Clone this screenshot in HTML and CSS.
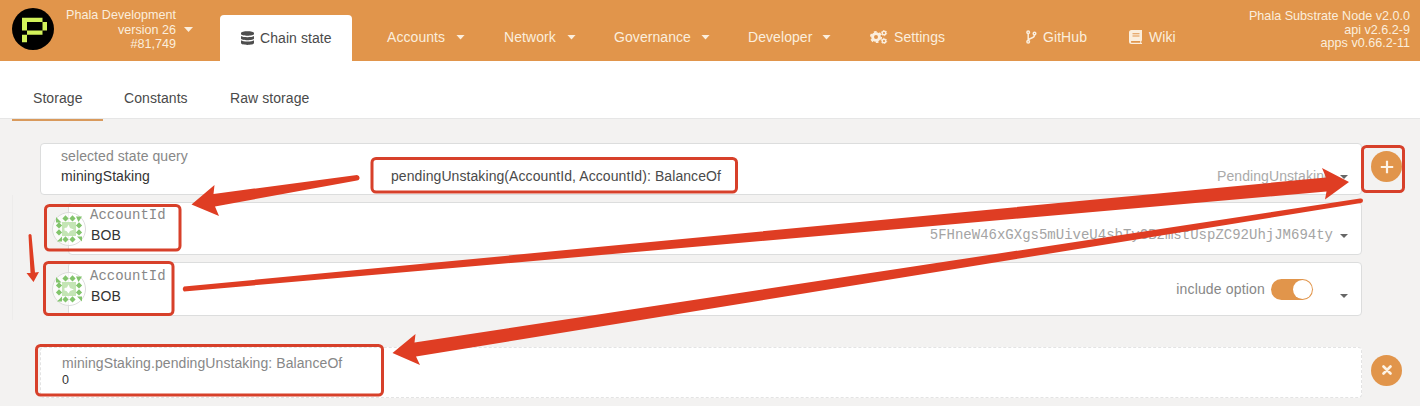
FILE: index.html
```html
<!DOCTYPE html>
<html lang="en">
<head>
<meta charset="utf-8">
<title>Chain state</title>
<link rel="stylesheet" href="styles.css">
</head>
<body>
<svg class="defs" width="0" height="0">
  <defs>
    <g id="identicon">
      <circle cx="17" cy="17" r="16.5" fill="#fff" fill-opacity=".65" stroke="#dcdcdc"/>
      <path fill="#c4e5b5" d="M10 10h14v14h-14z"/>
      <path fill="#fff" d="M16.500 12.500l1.500 3.500 4 1.500-4 1.500-1.500 2.500-2-2.500-2-.500v-2.500l2.500-.500z"/>
      <path fill="#82c46c" d="M4 5l5.500 5.500H4zM13.500 3.300l3.100 3.100-3.100 3.100-3.100-3.100zM20.500 3.300l3.100 3.100-3.100 3.100-3.100-3.100zM24 4.500h6l-3.500 5.500zM7 10.300l3.100 3.100-3.100 3.100-3.100-3.100zM7 17.300l3.100 3.100-3.100 3.100-3.100-3.100zM27 10.300l3.100 3.100-3.100 3.100-3.100-3.100zM27 17.300l3.100 3.100-3.100 3.100-3.100-3.100zM5 29.500l5-5V29.500zM13.500 24.300l3.100 3.100-3.100 3.100-3.100-3.100zM20.500 24.300l3.100 3.100-3.100 3.100-3.100-3.100zM25 24.500h5v5z"/>
    </g>
  </defs>
</svg>
<header class="topbar">
  <div class="chain">
    <svg class="logo" viewBox="0 0 42 42"><circle cx="21" cy="21" r="21"/><path fill="#d3f25b" fill-rule="evenodd" d="M10 9.700h20.500v4.300h4.500v8.500h-4.500v4.300H15v-4.300h-5zM15 14v8.500h15.500V14zM10 26.800h5v7.400h-5z"/></svg>
    <div class="chain-info">Phala Development<br>version 26<br>#81,749</div>
    <i class="caret"></i>
  </div>
  <nav class="menu">
    <a class="item active"><svg width="13" height="14" viewBox="0 0 13 14"><path fill="#4e4e4e" d="M0 2C0-.5 13-.5 13 2v1c0 2.300-13 2.300-13 0zM0 5c2 1.600 11 1.600 13 0v2.500c0 2.300-13 2.300-13 0zM0 9.300c2 1.600 11 1.600 13 0V12c0 2.500-13 2.500-13 0z"/></svg><span>Chain state</span></a>
    <a class="item accounts"><span>Accounts</span><i class="caret"></i></a>
    <a class="item network"><span>Network</span><i class="caret"></i></a>
    <a class="item governance"><span>Governance</span><i class="caret"></i></a>
    <a class="item developer"><span>Developer</span><i class="caret"></i></a>
    <a class="item settings"><svg width="18" height="14" viewBox="0 0 18 14"><circle cx="6" cy="7" r="3.400" fill="none" stroke="#fbeedd" stroke-width="2.800"/><circle cx="6" cy="7" r="5.200" fill="none" stroke="#fbeedd" stroke-width="1.800" stroke-dasharray="2.720"/><g fill="none" stroke="#fbeedd"><circle cx="14" cy="3" r="1.800" stroke-width="1.400"/><circle cx="14" cy="3" r="2.700" stroke-width=".9" stroke-dasharray="1.410"/><circle cx="14" cy="11" r="1.800" stroke-width="1.400"/><circle cx="14" cy="11" r="2.700" stroke-width=".9" stroke-dasharray="1.410"/></g></svg><span>Settings</span></a>
    <a class="item github"><svg width="11" height="14" viewBox="0 0 11 14"><g fill="none" stroke="#fbeedd" stroke-width="1.500"><circle cx="2.200" cy="2.200" r="1.300"/><circle cx="2.200" cy="11.800" r="1.300"/><circle cx="8.500" cy="3.500" r="1.300"/><path d="M2.200 3.500v7M8.500 5c0 4-5.500 2.500-6.300 5.300"/></g></svg><span>GitHub</span></a>
    <a class="item wiki"><svg width="13" height="14" viewBox="0 0 13 14"><path fill="#fbeedd" fill-rule="evenodd" d="M2.500 0H13v10.500l-.7.500v2h.7v1H2.500A2.500 2.500 0 0 1 0 11.500v-9A2.500 2.500 0 0 1 2.500 0zM3.500 3.300v1H10.500v-1zm0 2.200v1H10.500v-1zM2.500 11a1 1 0 0 0 0 1.800h8.700V11z"/></svg><span>Wiki</span></a>
  </nav>
  <div class="versions">Phala Substrate Node v2.0.0<br>api v2.6.2-9<br>apps v0.66.2-11</div>
</header>
<div class="tabs">
  <a class="tab selected">Storage</a><a class="tab constants">Constants</a><a class="tab raw">Raw storage</a>
</div>
<main>
  <div class="line">
    <section class="box query">
      <div class="module"><label>selected state query</label><span>miningStaking</span></div>
      <div class="method">pendingUnstaking(AccountId, AccountId): BalanceOf</div>
      <div class="doc">PendingUnstaking</div>
      <i class="caret dark"></i>
    </section>
    <button class="round"><svg width="14" height="14" viewBox="0 0 14 14"><path d="M7 .8v12.400M.8 7h12.400" stroke="#fdf3e6" stroke-width="2.200"/></svg></button>
  </div>
  <div class="params">
    <section class="box param">
      <svg class="avatar" viewBox="0 0 34 34"><use href="#identicon"/></svg>
      <div class="who"><label>AccountId</label><span>BOB</span></div>
      <div class="address">5FHneW46xGXgs5mUiveU4sbTyGBzmstUspZC92UhjJM694ty</div>
      <i class="caret dark"></i>
    </section>
    <section class="box param second">
      <svg class="avatar" viewBox="0 0 34 34"><use href="#identicon"/></svg>
      <div class="who"><label>AccountId</label><span>BOB</span></div>
      <div class="option">include option</div>
      <div class="toggle"><b></b></div>
      <i class="caret dark"></i>
    </section>
  </div>
  <div class="line">
    <section class="box result"><label>miningStaking.pendingUnstaking: BalanceOf</label><span>0</span></section>
    <button class="round"><svg width="10" height="10" viewBox="0 0 10 10"><path d="M1.500 1.500l7 7M8.500 1.500l-7 7" stroke="#fdf3e6" stroke-width="2.600" stroke-linecap="round"/></svg></button>
  </div>
</main>
<svg class="marks" width="1420" height="406" viewBox="0 0 1420 406">
  <g fill="none" stroke="#d7402a" stroke-width="3">
    <rect x="372" y="158.500" width="364.500" height="33.500" rx="4"/>
    <rect x="45.500" y="205.500" width="134.500" height="44.500" rx="4"/>
    <rect x="44.500" y="262.500" width="128.500" height="52" rx="4"/>
    <rect x="36.500" y="345.500" width="346" height="49.500" rx="4"/>
    <rect x="1362.500" y="146.500" width="41" height="45" rx="4"/>
  </g>
  <g fill="#df3d23">
    <path d="M357 175Q360 175.500 359.500 178.500Q359 180.500 357 180.500L215 206.500L219 216L191.500 204.500L214.500 185L213.500 194Z"/>
    <path d="M28.500 235Q30 233 31.500 235L35 272.500L39 272L33.500 282L26.500 273L30.500 273Z"/>
    <path d="M184 286.500L1326 177.500L1322 168L1349 182L1325 199.500L1326.500 191.500L184 291.500Q181.500 289 184 286.500Z"/>
    <path d="M1360 198.500Q1363 198 1363 200.500Q1363 202.500 1361 203L416 356.500L420 365L392.500 353L415.500 334L414.500 342.500Z"/>
  </g>
</svg>
</body>
</html>
```
FILE: styles.css
```css
* { box-sizing: border-box; }
body {
  margin: 0;
  width: 1420px;
  height: 406px;
  overflow: hidden;
  background: #f3f2f1;
  color: #4a4a4a;
  font: 14px/18px "Liberation Sans", Arial, sans-serif;
}
.defs { display: block; }
.topbar {
  display: flex;
  height: 61px;
  background: #e1954b;
  color: #fbeedd;
}
.chain { display: flex; width: 220px; padding: 8px 0 0 12px; }
.logo { width: 42px; height: 42px; }
.chain-info {
  width: 122px;
  text-align: right;
  font-size: 12.6px;
  line-height: 14.5px;
  white-space: nowrap;
}
.chain .caret { margin: 19px 0 0 8px; }
.caret {
  flex: none;
  width: 9px;
  height: 5px;
  background: currentColor;
  clip-path: polygon(0 0, 100% 0, 50% 100%);
}
.menu { display: flex; flex: 1; white-space: nowrap; }
.item { display: flex; align-items: center; padding-top: 13px; letter-spacing: .07px; }
.item svg { flex: none; margin-right: 7px; }
.item .caret { margin-left: auto; }
.active {
  width: 132px;
  height: 46px;
  margin: 15px 35px 0 0;
  padding: 0 0 0 21px;
  background: #fff;
  border-radius: 4px 4px 0 0;
  color: #4a4a4a;
}
.active svg { margin-right: 6px; }
.accounts { width: 78px; margin-right: 39px; }
.network { width: 72px; margin-right: 38px; }
.governance { width: 96px; margin-right: 38px; }
.developer { width: 83px; margin-right: 39px; }
.settings { width: 156px; }
.settings svg { margin-right: 6px; }
.github { width: 103px; }
.github svg { margin-right: 6px; }
.versions {
  padding: 10px 10px 0 0;
  text-align: right;
  font-size: 12.6px;
  line-height: 13.500px;
  white-space: nowrap;
}
.tabs {
  display: flex;
  height: 58px;
  padding-left: 12px;
  background: #fff;
  border-bottom: 1px solid #e6e6e6;
  line-height: 20px;
  letter-spacing: .07px;
}
.tab { padding-top: 27px; }
.selected { width: 91px; height: 60px; padding-left: 21px; border-bottom: 2px solid #d99a5c; }
.constants { margin-left: 21px; width: 106px; }
main { padding: 24px 0 0 12px; letter-spacing: .08px; }
.line { display: flex; align-items: center; gap: 9px; padding-left: 28px; }
.box {
  display: flex;
  background: #fff;
  border: 1px solid #dcdddd;
  border-radius: 4px;
  white-space: nowrap;
}
label, .who span, .module span, .result span { display: block; }
label { color: #878787; }
.query { width: 1322px; height: 52px; padding-left: 20px; }
.module { width: 330px; padding-top: 3px; }
.module span { margin-top: 2px; color: #333; }
.method { width: 826px; padding-top: 23px; }
.doc { width: 115px; padding-top: 23px; color: #aaa; }
.query .caret { margin: 31px 0 0 8px; }
.dark { width: 8px; height: 4px; color: #666; }
.round {
  display: flex;
  align-items: center;
  justify-content: center;
  width: 31px;
  height: 31px;
  margin: 0;
  padding: 0;
  border: 0;
  border-radius: 50%;
  background: #e1954b;
}
.line .round { margin-top: -5px; }
.params {
  height: 125px;
  padding: 7px 0 0 55px;
  border-left: 1px solid #edeceb;
}
.param { width: 1294px; height: 53px; margin-bottom: 7px; }
.param.second { height: 54px; }
.param.second .who { padding-top: 4px; }
.avatar { flex: none; width: 34px; height: 34px; margin: 9px 0 0 -17px; }
.who { width: 82px; padding: 3px 0 0 4px; }
.who label { font-family: "Liberation Mono", monospace; letter-spacing: 0; }
.who span { margin: 2px 0 0 1px; color: #333; }
.address {
  margin-left: auto;
  padding-top: 23px;
  color: #a4a4a4;
  font-family: "Liberation Mono", monospace;
  letter-spacing: 0;
}
.param .caret { margin: 31px 13px 0 7px; }
.option { margin: 17px 6px 0 auto; color: #878787; letter-spacing: .17px; }
.toggle {
  width: 42px;
  height: 21px;
  margin: 16px 20px 0 0;
  padding: 1px;
  border-radius: 11px;
  background: #e1954b;
}
.toggle b { display: block; width: 19px; height: 19px; margin-left: 21px; border-radius: 50%; background: #fff; }
.params + .line { padding-top: 27px; }
.result {
  display: block;
  width: 1322px;
  height: 51px;
  padding: 6px 0 0 21px;
  border: 1px dashed #e3e3e3;
}
.result span { color: #333; font-size: 12.500px; line-height: 17px; }
.marks { position: absolute; left: 0; top: 0; pointer-events: none; }
```
